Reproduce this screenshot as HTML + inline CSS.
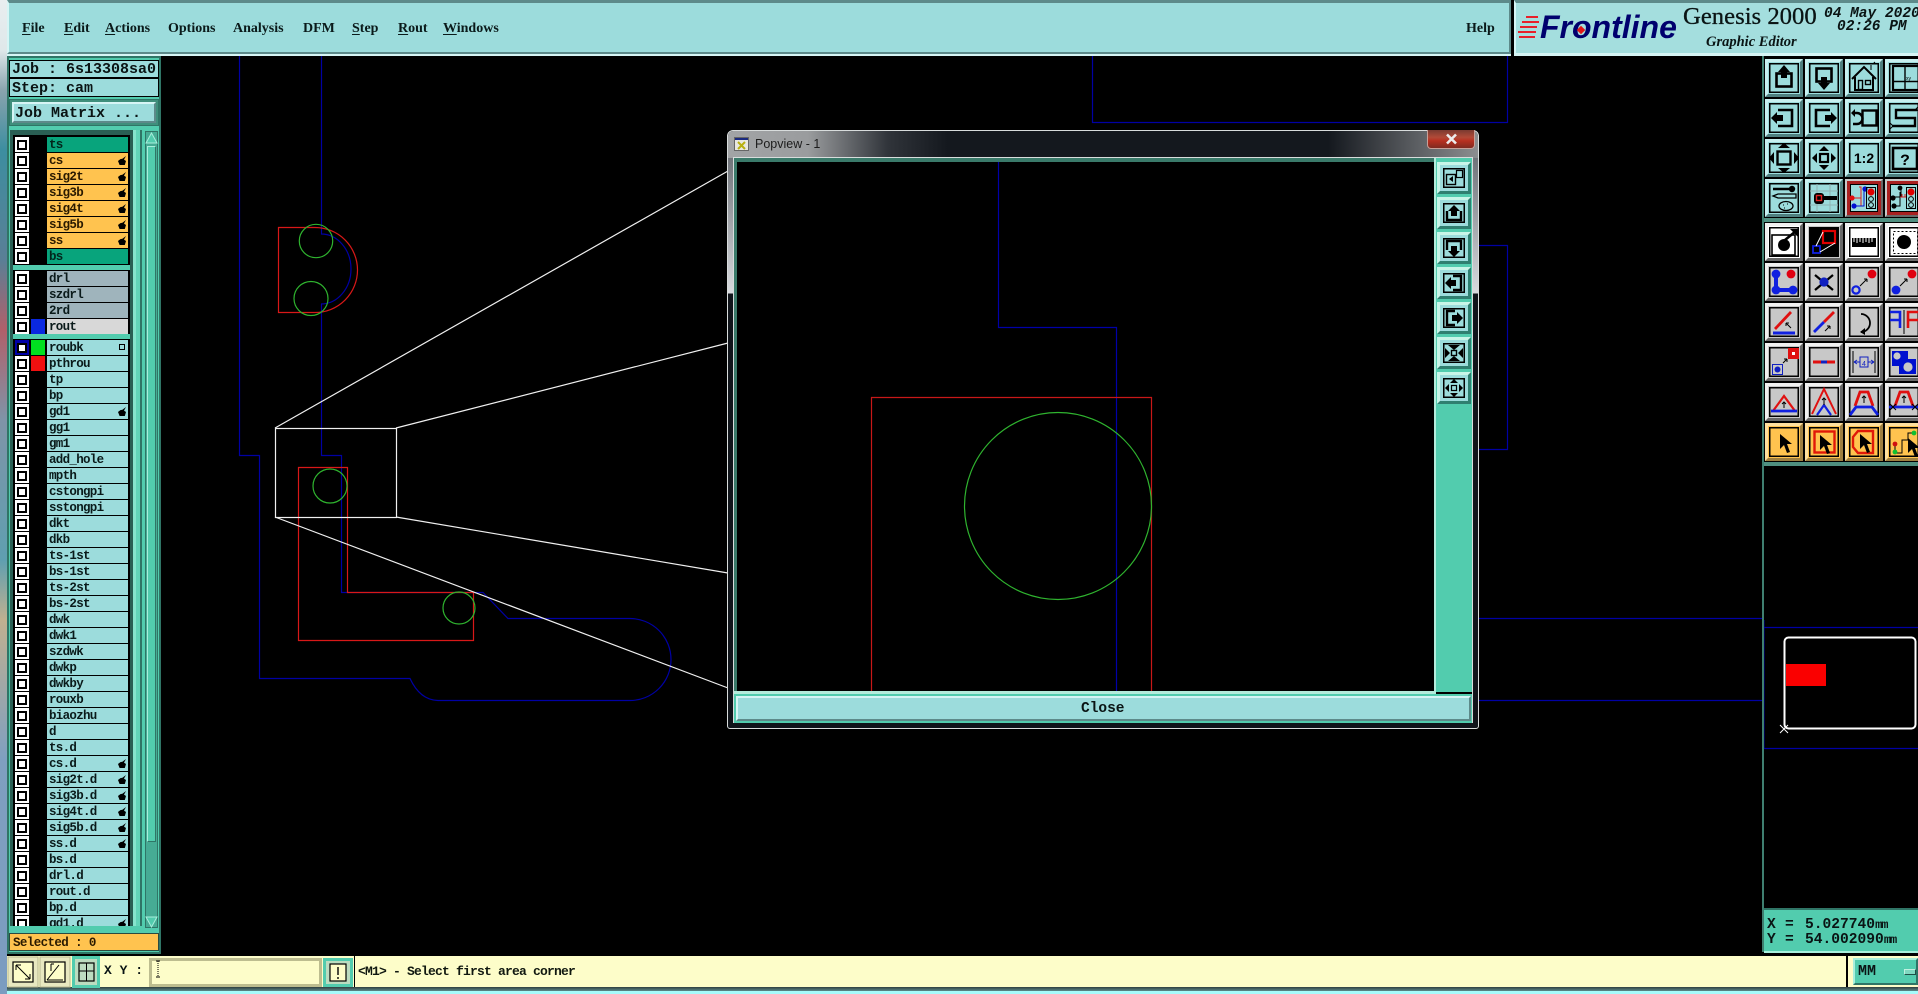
<!DOCTYPE html>
<html><head><meta charset="utf-8"><title>Genesis 2000</title>
<style>
html,body{margin:0;padding:0;background:#000;width:1918px;height:994px;overflow:hidden}
body{position:relative;font-family:"Liberation Mono",monospace;color:#000}
.a{position:absolute}
.m{position:absolute;top:20px;font:bold 14px/18px "Liberation Serif",serif;color:#0a1a1a}
.m u{text-underline-offset:2px}
.t{position:absolute;white-space:pre;font-family:"Liberation Mono",monospace;font-weight:bold;color:#0a1414}
#list{position:absolute;left:13px;top:135px;width:117px;height:791px;background:#000;overflow:hidden}
.gp{position:absolute;left:0;width:117px}
.r{position:relative;height:16px}
.c{position:absolute;left:2px;top:0;width:14px;height:15px;background:#fff}
.c:after{content:"";position:absolute;left:2px;top:3px;width:6px;height:6px;border:2px solid #000;background:#fff}
.c.bl{background:#0000a8}
.s{position:absolute;left:18px;top:0;width:14px;height:15px}
.l{position:absolute;left:34px;top:0;width:81px;height:15px;background:#9cdcdc;font:bold 12.5px/17px "Liberation Mono",monospace;letter-spacing:-.7px;padding-left:2px;box-sizing:border-box;color:#0a1a1a;white-space:pre;overflow:hidden}
.g{background:#08a47c;color:#02261c}.o{background:#ffc34f;color:#2a1a00}.y{background:#9fb4bc}.w{background:#d8d8d8}
.h:after{content:"";position:absolute;right:2px;top:3px;width:8px;height:9px;background:#000;clip-path:polygon(0 55%,30% 35%,55% 30%,100% 0,75% 40%,100% 55%,85% 100%,20% 100%)}
.q:after{content:"";position:absolute;right:3px;top:4px;width:4px;height:4px;border:1px solid #000;background:#9cdcdc}
</style></head><body>
<!-- desktop strip -->
<div class="a" style="left:0;top:0;width:7px;height:994px;background:linear-gradient(#e8eef0 0,#dfe8ea 50px,#8aa4ae 90px,#3d8ea0 150px,#5a7f96 260px,#b0606a 330px,#7f94a8 420px,#5f9fb0 560px,#c0b090 620px,#7f9fc0 760px,#7b9cc0 994px)"></div>

<!-- top menu bar -->
<div class="a" style="left:7px;top:0;width:1504px;height:54px;box-sizing:border-box;background:#9cdcdc;border-top:3px solid #5d8a8a;border-left:2px solid #d6f5f5;border-bottom:2px solid #5d8a8a;border-right:2px solid #5d8a8a"></div>
<div class="a" style="left:7px;top:54px;width:1504px;height:2px;background:#d6f5f5"></div>
<span class="m" style="left:22px"><u>F</u>ile</span>
<span class="m" style="left:64px"><u>E</u>dit</span>
<span class="m" style="left:105px"><u>A</u>ctions</span>
<span class="m" style="left:168px">Options</span>
<span class="m" style="left:233px">Analysis</span>
<span class="m" style="left:303px">DFM</span>
<span class="m" style="left:352px"><u>S</u>tep</span>
<span class="m" style="left:398px"><u>R</u>out</span>
<span class="m" style="left:443px"><u>W</u>indows</span>
<span class="m" style="left:1466px">Help</span>

<!-- logo panel -->
<div class="a" style="left:1514px;top:0;width:404px;height:56px;box-sizing:border-box;background:#a4dede;border-top:3px solid #5d8a8a;border-left:2px solid #d6f5f5;border-bottom:3px solid #d6f5f5"></div>
<svg class="a" style="left:1518px;top:14px" width="24" height="28"><path d="M8 2h12v2H8zM4 7h17v2H4zM2 12h17v2H2zM0 17h18v2H0zM1 22h16v2H1z" fill="#e8202a"/></svg>
<div class="a" style="left:1540px;top:8px;font:italic bold 32px/38px 'Liberation Sans',sans-serif;color:#00006e;white-space:pre">Frontline</div>
<div class="a" style="left:1578px;top:27px;width:6px;height:6px;background:#e01818;transform:rotate(45deg)"></div>
<div class="a" style="left:1683px;top:2px;font:24.7px/30px 'Liberation Serif',serif;color:#0a1414;white-space:pre;-webkit-text-stroke:.3px #0a1414">Genesis 2000</div>
<div class="a" style="left:1706px;top:33px;font:italic bold 14.5px/18px 'Liberation Serif',serif;color:#0a1414;white-space:pre">Graphic Editor</div>
<div class="a" style="left:1824px;top:5px;font:italic bold 14.5px/18px 'Liberation Mono',monospace;color:#0a1414;white-space:pre">04 May 2020</div>
<div class="a" style="left:1837px;top:18px;font:italic bold 14.5px/18px 'Liberation Mono',monospace;color:#0a1414;white-space:pre">02:26 PM</div>

<!-- left panel -->
<div class="a" style="left:7px;top:56px;width:154px;height:898px;box-sizing:border-box;background:#52ccae;border:2px solid #2f7566"></div>
<div class="a" style="left:9px;top:60px;width:150px;height:18px;box-sizing:border-box;background:#9cdcdc;border:1px solid #000"></div>
<div class="t" style="left:12px;top:61px;font-size:15px;line-height:18px">Job : 6s13308sa0</div>
<div class="a" style="left:9px;top:78px;width:150px;height:19px;box-sizing:border-box;background:#9cdcdc;border:1px solid #000"></div>
<div class="t" style="left:12px;top:80px;font-size:15px;line-height:18px">Step: cam</div>
<div class="a" style="left:9px;top:99px;width:150px;height:27px;box-sizing:border-box;background:#3f8f7c;border:1px solid #2f7566"></div>
<div class="a" style="left:12px;top:102px;width:144px;height:21px;box-sizing:border-box;background:#9cdcdc;border:2px solid;border-color:#d6f5f5 #5d8a8a #5d8a8a #d6f5f5"></div>
<div class="t" style="left:15px;top:104px;font-size:15px;line-height:19px">Job Matrix ...</div>
<!-- list frame -->
<div class="a" style="left:10px;top:130px;width:123px;height:796px;background:#2a5f54"></div>
<div class="a" style="left:133px;top:130px;width:3px;height:796px;background:#86e4cc"></div>
<div class="a" style="left:136px;top:130px;width:4px;height:796px;background:#62d4b8"></div>
<div class="a" style="left:140px;top:130px;width:2px;height:796px;background:#2f7566"></div>
<div id="list">
<div class="gp" style="top:2px">
<div class="r"><b class="c"></b><span class="l g">ts</span></div>
<div class="r"><b class="c"></b><span class="l o h">cs</span></div>
<div class="r"><b class="c"></b><span class="l o h">sig2t</span></div>
<div class="r"><b class="c"></b><span class="l o h">sig3b</span></div>
<div class="r"><b class="c"></b><span class="l o h">sig4t</span></div>
<div class="r"><b class="c"></b><span class="l o h">sig5b</span></div>
<div class="r"><b class="c"></b><span class="l o h">ss</span></div>
<div class="r"><b class="c"></b><span class="l g">bs</span></div>
</div>
<div class="a" style="left:0;top:130px;width:117px;height:5px;background:#52ccae"></div>
<div class="gp" style="top:136px">
<div class="r"><b class="c"></b><span class="l y">drl</span></div>
<div class="r"><b class="c"></b><span class="l y">szdrl</span></div>
<div class="r"><b class="c"></b><span class="l y">2rd</span></div>
<div class="r"><b class="c"></b><span class="s" style="background:#0a28e0"></span><span class="l w">rout</span></div>
</div>
<div class="a" style="left:0;top:199px;width:117px;height:5px;background:#52ccae"></div>
<div class="gp" style="top:205px">
<div class="r"><b class="c bl"></b><span class="s" style="background:#00e020"></span><span class="l q">roubk</span></div>
<div class="r"><b class="c"></b><span class="s" style="background:#f01010"></span><span class="l">pthrou</span></div>
<div class="r"><b class="c"></b><span class="l">tp</span></div>
<div class="r"><b class="c"></b><span class="l">bp</span></div>
<div class="r"><b class="c"></b><span class="l h">gd1</span></div>
<div class="r"><b class="c"></b><span class="l">gg1</span></div>
<div class="r"><b class="c"></b><span class="l">gm1</span></div>
<div class="r"><b class="c"></b><span class="l">add_hole</span></div>
<div class="r"><b class="c"></b><span class="l">mpth</span></div>
<div class="r"><b class="c"></b><span class="l">cstongpi</span></div>
<div class="r"><b class="c"></b><span class="l">sstongpi</span></div>
<div class="r"><b class="c"></b><span class="l">dkt</span></div>
<div class="r"><b class="c"></b><span class="l">dkb</span></div>
<div class="r"><b class="c"></b><span class="l">ts-1st</span></div>
<div class="r"><b class="c"></b><span class="l">bs-1st</span></div>
<div class="r"><b class="c"></b><span class="l">ts-2st</span></div>
<div class="r"><b class="c"></b><span class="l">bs-2st</span></div>
<div class="r"><b class="c"></b><span class="l">dwk</span></div>
<div class="r"><b class="c"></b><span class="l">dwk1</span></div>
<div class="r"><b class="c"></b><span class="l">szdwk</span></div>
<div class="r"><b class="c"></b><span class="l">dwkp</span></div>
<div class="r"><b class="c"></b><span class="l">dwkby</span></div>
<div class="r"><b class="c"></b><span class="l">rouxb</span></div>
<div class="r"><b class="c"></b><span class="l">biaozhu</span></div>
<div class="r"><b class="c"></b><span class="l">d</span></div>
<div class="r"><b class="c"></b><span class="l">ts.d</span></div>
<div class="r"><b class="c"></b><span class="l h">cs.d</span></div>
<div class="r"><b class="c"></b><span class="l h">sig2t.d</span></div>
<div class="r"><b class="c"></b><span class="l h">sig3b.d</span></div>
<div class="r"><b class="c"></b><span class="l h">sig4t.d</span></div>
<div class="r"><b class="c"></b><span class="l h">sig5b.d</span></div>
<div class="r"><b class="c"></b><span class="l h">ss.d</span></div>
<div class="r"><b class="c"></b><span class="l">bs.d</span></div>
<div class="r"><b class="c"></b><span class="l">drl.d</span></div>
<div class="r"><b class="c"></b><span class="l">rout.d</span></div>
<div class="r"><b class="c"></b><span class="l">bp.d</span></div>
<div class="r"><b class="c"></b><span class="l h">gd1.d</span></div>
</div>
</div>
<!-- scrollbar -->
<div class="a" style="left:145px;top:131px;width:13px;height:797px;background:#46ab94;box-sizing:border-box;border:1px solid #2f7566"></div>
<div class="a" style="left:147px;top:146px;width:9px;height:696px;box-sizing:border-box;background:#52ccae;border:1px solid;border-color:#a8efdc #2f7566 #2f7566 #a8efdc"></div>
<svg class="a" style="left:145px;top:131px" width="13" height="14"><path d="M6.5 2L12 12H1z" fill="#52ccae" stroke="#a8efdc"/></svg>
<svg class="a" style="left:145px;top:915px" width="13" height="14"><path d="M6.5 12L12 2H1z" fill="#52ccae" stroke="#a8efdc"/></svg>
<!-- selected -->
<div class="a" style="left:9px;top:933px;width:150px;height:18px;box-sizing:border-box;background:#ffc34f;border:1px solid #2a4a40"></div>
<div class="t" style="left:13px;top:934px;font-size:12.5px;line-height:18px;letter-spacing:-.6px;color:#2a1a00">Selected : 0</div>

<!-- canvas geometry -->
<svg class="a" style="left:0;top:0" width="1918" height="994" fill="none">
<g stroke="#0000a4" stroke-width="1.2">
<path d="M239.5 56V455.5H259.5V678.5H410Q420 700 438 700.5H630A41 41 0 0 0 630 618.5H508L483 592.5H341.5V455.5H321.5V304"/>
<path d="M321.5 56V234.5M321 234A30 35 0 0 1 321 304"/>
<path d="M1092.5 56V122.5H1507.5V56"/>
<path d="M1479 245.5H1507.5V449.5H1479"/>
<path d="M1479 618.5H1763M1479 700.5H1763"/>
</g>
<g stroke="#d81818" stroke-width="1.2">
<path d="M278.5 227.5H315A42.5 42.5 0 0 1 315 312.5H278.5Z"/>
<path d="M298.5 467.5V640.5H473.5V592.5H347.5V467.5Z"/>
</g>
<g stroke="#2fb42f" stroke-width="1.2">
<circle cx="316" cy="241" r="16.7"/><circle cx="311" cy="298.5" r="17"/><circle cx="330" cy="486" r="17"/><circle cx="459" cy="608" r="16"/>
</g>
<g stroke="#f0f0f0" stroke-width="1.2">
<rect x="275.5" y="428.5" width="121" height="89"/>
<path d="M275 428L728 171M396 428L728 343M396 517L728 573M275 517L728 688"/>
</g>
</svg>

<!-- right panel line + separators -->
<div class="a" style="left:1762px;top:56px;width:2px;height:896px;background:#3f7f70"></div>
<div class="a" style="left:1764px;top:218px;width:154px;height:4px;background:#4f8f80"></div>
<div class="a" style="left:1764px;top:462px;width:154px;height:4px;background:#4f8f80"></div>

<!-- minimap -->
<svg class="a" style="left:1764px;top:620px" width="154" height="135" fill="none">
<path d="M0 7.5H154M0 128.5H154" stroke="#0000a4" stroke-width="1.2"/>
<path d="M0 0V129" stroke="#0000a4"/>
<rect x="22" y="44" width="40" height="22" fill="#fa0000"/>
<rect x="20.5" y="17.5" width="131" height="91" rx="4" stroke="#fff" stroke-width="2"/>
<path d="M16 105l8 8M24 105l-8 8" stroke="#fff"/>
</svg>

<!-- coord panel -->
<div class="a" style="left:1764px;top:908px;width:154px;height:45px;box-sizing:border-box;background:#52ccae;border-top:2px solid #2f7566;border-bottom:2px solid #a8efdc"></div>
<div class="t" style="left:1767px;top:917px;font-size:14.6px;line-height:17px">X</div>
<div class="t" style="left:1785px;top:917px;font-size:14.6px;line-height:17px">=</div>
<div class="t" style="left:1805px;top:917px;font-size:14.6px;line-height:17px">5.027740<span style="font-size:12px;letter-spacing:-1px">mm</span></div>
<div class="t" style="left:1767px;top:932px;font-size:14.6px;line-height:17px">Y</div>
<div class="t" style="left:1785px;top:932px;font-size:14.6px;line-height:17px">=</div>
<div class="t" style="left:1805px;top:932px;font-size:14.6px;line-height:17px">54.002090<span style="font-size:12px;letter-spacing:-1px">mm</span></div>

<!-- status bar -->
<div class="a" style="left:7px;top:956px;width:1911px;height:31px;background:#fdfdc9"></div>
<div class="a" style="left:7px;top:987px;width:1911px;height:4px;background:linear-gradient(#2f3f3f,#5d8a8a)"></div>
<div class="a" style="left:7px;top:991px;width:1911px;height:3px;background:#a6fbfb"></div>
<svg class="a" style="left:7px;top:956px" width="350" height="32" fill="none">
<g><rect x="1" y="1" width="30" height="30" fill="#e8e8c0" stroke="#b8b890"/><rect x="6" y="6" width="20" height="20" stroke="#000" stroke-width="1.2" fill="#fdfdc9"/><path d="M9 9l14 14M9 9h5M9 9v5M23 23h-5M23 23v-5" stroke="#000"/></g>
<g transform="translate(32,0)"><rect x="1" y="1" width="30" height="30" fill="#e8e8c0" stroke="#b8b890"/><rect x="6" y="6" width="20" height="20" stroke="#000" stroke-width="1.2" fill="#fdfdc9"/><path d="M8 24L20 9M8 24H24M12 8v7M12 8h3" stroke="#000"/></g>
<g transform="translate(65,0)"><rect x="0" y="0" width="28" height="32" fill="#52ccae"/><rect x="3" y="3" width="22" height="26" fill="#bcdcc0"/><rect x="7" y="7" width="15" height="18" stroke="#000" stroke-width="1.2"/><path d="M14.5 7v18M7 15h15" stroke="#000"/></g>
<g transform="translate(142,2)"><rect x="1.5" y="1.5" width="170" height="26" stroke="#bdbd8f" stroke-width="3"/><path d="M9 3v16" stroke="#000" stroke-dasharray="1 1"/><path d="M7 3h4M7 19h4" stroke="#000"/></g>
<g transform="translate(316,2)"><rect x="0" y="0" width="30" height="29" fill="#52ccae"/><rect x="3" y="3" width="24" height="23" fill="#bcdcc0"/><rect x="7" y="6" width="16" height="17" fill="#fdfdc9" stroke="#000" stroke-width="1.2"/><path d="M15 9v8M15 19v2" stroke="#000" stroke-width="1.4"/></g>
<path d="M347.5 0V31" stroke="#000"/>
</svg>
<div class="t" style="left:104px;top:963px;font-size:13px;line-height:16px">X Y :</div>
<div class="t" style="left:358px;top:964px;font-size:13px;line-height:15px;letter-spacing:-.8px;color:#101810">&lt;M1&gt; - Select first area corner</div>
<div class="a" style="left:1846px;top:956px;width:2px;height:31px;background:#000"></div>
<div class="a" style="left:1853px;top:958px;width:65px;height:27px;box-sizing:border-box;background:#52ccae;border:2px solid;border-color:#a8efdc #2f7566 #2f7566 #a8efdc"></div>
<div class="t" style="left:1858px;top:963px;font-size:15px;line-height:17px;letter-spacing:0">MM</div>
<div class="a" style="left:1904px;top:969px;width:12px;height:6px;box-sizing:border-box;background:#7fd8c0;border:1px solid;border-color:#c0f0e0 #1f4f46 #1f4f46 #c0f0e0"></div>

<!-- popup window -->
<div class="a" style="left:727px;top:130px;width:752px;height:599px;box-sizing:border-box;border:1px solid #d8dcdc;border-radius:6px 6px 3px 3px;background:#10141a;overflow:hidden">
  <div class="a" style="left:0;top:0;width:750px;height:27px;background:linear-gradient(90deg,#a2a4a6 0,#9a9c9e 80px,#30343a 160px,#14181e 220px,#14181e 600px,#55585c 680px,#8c8e90 750px)"></div>
  <div class="a" style="left:0;top:27px;width:5px;height:141px;background:linear-gradient(#70747a,#d8dade 135px,#10141a 136px)"></div>
  <div class="a" style="left:745px;top:27px;width:5px;height:141px;background:linear-gradient(#70747a,#d8dade 135px,#10141a 136px)"></div>
</div>
<div class="a" style="left:733px;top:157px;width:740px;height:566px;box-sizing:border-box;background:#52ccae;border:1px solid #d8dcdc;border-bottom:none"></div>
<svg class="a" style="left:734px;top:135px" width="16" height="18"><rect x=".5" y="2.5" width="14" height="13" fill="#e8e8e0" stroke="#666"/><rect x="1" y="3" width="13" height="2" fill="#1a2a80"/><path d="M4 7l7 7M11 7l-7 7" stroke="#b8b010" stroke-width="2"/></svg>
<div class="a" style="left:755px;top:136px;font:12.5px/16px 'Liberation Sans','Noto Sans CJK SC',sans-serif;color:#1c1c1c;white-space:pre">Popview - 1</div>
<div class="a" style="left:1427px;top:130px;width:48px;height:19px;box-sizing:border-box;border:1px solid #c8a098;border-top:none;border-radius:0 0 4px 4px;background:linear-gradient(#7a3a30,#b04a38 40%,#b83020 60%,#7f2a20)"></div>
<svg class="a" style="left:1445px;top:133px" width="14" height="12"><path d="M2 1.500l9 9M11 1.500l-9 9" stroke="#ececec" stroke-width="2.6"/></svg>
<!-- popup canvas -->
<div class="a" style="left:734px;top:158px;width:702px;height:537px;background:#3a7a6a"></div>
<div class="a" style="left:737px;top:162px;width:697px;height:529px;background:#000"></div>
<div class="a" style="left:734px;top:691px;width:702px;height:3px;background:#b4ecdc"></div>
<div class="a" style="left:1434px;top:158px;width:2px;height:536px;background:#b4ecdc"></div>
<div class="a" style="left:1436px;top:692px;width:36px;height:2px;background:#000"></div>
<div class="a" style="left:734px;top:694px;width:738px;height:29px;background:#52ccae"></div>
<div class="a" style="left:736px;top:696px;width:735px;height:25px;box-sizing:border-box;background:#9cdcdc;border:2px solid;border-color:#d6f5f5 #5d8a8a #5d8a8a #d6f5f5"></div>
<div class="t" style="left:1081px;top:700px;font-size:14.5px;line-height:18px">Close</div>

<!-- top svg: popup geometry + toolbars -->
<svg class="a" style="left:0;top:0" width="1918" height="994" fill="none">
<defs>
<g id="bt"><rect width="38" height="38" fill="#c8f0f0"/><path d="M38 0V38H0L3 35H35V3Z" fill="#4f8080"/><rect x="3" y="3" width="32" height="32" fill="#9cdcdc"/><rect x="4.750" y="4.750" width="28.500" height="28.500" stroke="#000" stroke-width="1.500"/></g>
<g id="bg"><rect width="38" height="38" fill="#f0f0f0"/><path d="M38 0V38H0L3 35H35V3Z" fill="#686868"/><rect x="3" y="3" width="32" height="32" fill="#c8c8c8"/><rect x="4.750" y="4.750" width="28.500" height="28.500" stroke="#000" stroke-width="1.500"/></g>
<g id="bw"><rect width="38" height="38" fill="#f0f0f0"/><path d="M38 0V38H0L3 35H35V3Z" fill="#686868"/><rect x="3" y="3" width="32" height="32" fill="#fff"/><rect x="4.750" y="4.750" width="28.500" height="28.500" stroke="#000" stroke-width="1.500"/></g>
<g id="bo"><rect width="38" height="38" fill="#ffe0a0"/><path d="M38 0V38H0L3 35H35V3Z" fill="#a08040"/><rect x="3" y="3" width="32" height="32" fill="#ffc34f"/><rect x="4.750" y="4.750" width="28.500" height="28.500" stroke="#000" stroke-width="1.500"/></g>
<g id="br"><rect width="38" height="38" fill="#c8c8c8"/><path d="M38 0V38H0L3 35H35V3Z" fill="#686868"/><rect x="2" y="2" width="34" height="34" fill="#a82020"/><rect x="5.500" y="5.500" width="27" height="27" fill="#9cdcdc" stroke="#000"/></g>
<g id="bp"><rect width="34" height="32" fill="#2f7f70"/><path d="M0 0H34L31 3H3V29L0 32Z" fill="#c8f5e8"/><rect x="3" y="3" width="28" height="26" fill="#9cdcdc"/><rect x="6.750" y="6.750" width="20.500" height="18.500" stroke="#000" stroke-width="1.500"/></g>
<path id="ptr" d="M0 0L0 15L4 11L7 19L10 18L7 10L12 10Z" fill="#000"/>
</defs>

<!-- popup geometry -->
<path d="M998.5 162V327.5H1116.5V691" stroke="#0000a8" stroke-width="1.2"/>
<path d="M871.5 691V397.5H1151.5V691" stroke="#c81818" stroke-width="1.2"/>
<circle cx="1058" cy="506" r="93.5" stroke="#2fb42f" stroke-width="1.2"/>

<!-- popup toolbar -->
<g transform="translate(1437,162)"><use href="#bp"/><rect x="9.5" y="12.5" width="9" height="10" stroke="#000" stroke-width="1.4"/><rect x="19.5" y="8.5" width="6" height="7" stroke="#000" stroke-width="1.2"/><path d="M16 14l-4 3 4 3z" fill="#000"/></g>
<g transform="translate(1437,197)"><use href="#bp"/><path d="M10 14v9h14v-9" stroke="#000" stroke-width="2.4"/><path d="M17 8l6 6h-3v5h-6v-5h-3z" fill="#000"/></g>
<g transform="translate(1437,232)"><use href="#bp"/><path d="M10 18V9h14v9" stroke="#000" stroke-width="2.4"/><path d="M17 25l6-6h-3v-5h-6v5h-3z" fill="#000"/></g>
<g transform="translate(1437,267)"><use href="#bp"/><path d="M16 9h8v14h-8" stroke="#000" stroke-width="2.4"/><path d="M8 16l6-6v3h5v6h-5v3z" fill="#000"/></g>
<g transform="translate(1437,302)"><use href="#bp"/><path d="M18 9h-8v14h8" stroke="#000" stroke-width="2.4"/><path d="M26 16l-6-6v3h-5v6h5v3z" fill="#000"/></g>
<g transform="translate(1437,337)"><use href="#bp"/><rect x="14.5" y="13.5" width="5" height="5" stroke="#000" stroke-width="1.4"/><path d="M11 8h12l-6 5zM11 24h12l-6-5zM8 11v10l5-5zM26 11v10l-5-5z" fill="#000"/></g>
<g transform="translate(1437,372)"><use href="#bp"/><rect x="14.5" y="13.5" width="5" height="5" stroke="#000" stroke-width="1.2"/><path d="M17 7l4 4h-8zM17 25l4-4h-8zM8 16l4-4v8zM26 16l-4-4v8z" fill="#000"/></g>

<!-- main toolbar row 1 -->
<g transform="translate(1765,59)"><use href="#bt"/><rect x="11.5" y="14.5" width="15" height="13" stroke="#000" stroke-width="2.6"/><path d="M19 6l6 7h-3v6h-6v-6h-3z" fill="#000"/></g>
<g transform="translate(1805,59)"><use href="#bt"/><rect x="11.5" y="9.5" width="15" height="13" stroke="#000" stroke-width="2.6"/><path d="M19 31l-6-7h3v-6h6v6h3z" fill="#000"/></g>
<g transform="translate(1845,59)"><use href="#bt"/><path d="M7 20L19 8L31 20M10 18V31H28V18" stroke="#000" stroke-width="2"/><rect x="13.5" y="21.5" width="4" height="9" stroke="#000" stroke-width="1.4"/><rect x="20.5" y="21.5" width="5" height="4" stroke="#000" stroke-width="1.4"/><path d="M26 11V6M28 5l2-2" stroke="#000"/></g>
<g transform="translate(1885,59)"><use href="#bt"/><rect x="8" y="7" width="30" height="24" stroke="#000" stroke-width="2.2"/><path d="M20 7V31M8 22.500H38" stroke="#000" stroke-width="1.400"/><text x="21" y="21" font-family="Liberation Sans" font-size="5" fill="#000">xy</text></g>
<!-- row 2 -->
<g transform="translate(1765,99)"><use href="#bt"/><path d="M13 11h14v16H13" stroke="#000" stroke-width="2.6"/><path d="M6 19l6-6v3h6v6h-6v3z" fill="#000"/></g>
<g transform="translate(1805,99)"><use href="#bt"/><path d="M25 11H11v16h14" stroke="#000" stroke-width="2.6"/><path d="M32 19l-6-6v3h-6v6h6v3z" fill="#000"/></g>
<g transform="translate(1845,99)"><use href="#bt"/><rect x="17.5" y="11.5" width="14" height="15" stroke="#000" stroke-width="2.4"/><path d="M9 14h3a4 4 0 0 1 0 11H8" stroke="#000" stroke-width="2.4"/><path d="M6 14l4-4v8z" fill="#000"/></g>
<g transform="translate(1885,99)"><use href="#bt"/><path d="M32 11H11V19H30V27H7" stroke="#000" stroke-width="2.4"/><path d="M34 7l-3 3 3 3M5 24l3 3-3 3" stroke="#000"/></g>
<!-- row 3 -->
<g transform="translate(1765,139)"><use href="#bt"/><rect x="12.5" y="12.5" width="13" height="13" stroke="#000" stroke-width="2.4"/><path d="M13 9h12l-6-5zM13 29h12l-6 5zM9 13v12l-5-6zM29 13v12l5-6z" fill="#000"/></g>
<g transform="translate(1805,139)"><use href="#bt"/><rect x="15" y="15" width="8" height="8" stroke="#000" stroke-width="2.2"/><path d="M19 7l5 5H14zM19 31l5-5H14zM7 19l5-5v10zM31 19l-5-5v10z" fill="#000"/></g>
<g transform="translate(1845,139)"><use href="#bt"/><text x="19" y="24" text-anchor="middle" font-family="Liberation Sans" font-weight="bold" font-size="14" fill="#000">1:2</text></g>
<g transform="translate(1885,139)"><use href="#bt"/><rect x="8" y="9" width="24" height="21" stroke="#000" stroke-width="2.6"/><text x="20" y="26" text-anchor="middle" font-family="Liberation Mono" font-weight="bold" font-size="16" fill="#000">?</text></g>
<!-- row 4 -->
<g transform="translate(1765,179)"><use href="#bt"/><path d="M8 10H25" stroke="#000" stroke-width="2.6"/><circle cx="27" cy="10" r="3.200" fill="#000"/><path d="M8 17l5-2H31V19H13Z" stroke="#000" stroke-width="1.300"/><ellipse cx="21" cy="27" rx="7" ry="4.5" stroke="#000" stroke-width="1.300"/><path d="M18 26h1M22 25h1M19 29h1" stroke="#000"/></g>
<g transform="translate(1805,179)"><use href="#bt"/><path d="M12 5V33M25 5V33M5 12H33M5 26H33" stroke="#8fb4b4"/><rect x="9" y="14" width="10" height="11" rx="3" fill="#000"/><rect x="11.5" y="16.5" width="5" height="5" stroke="#e02020" stroke-width="1.4"/><path d="M19 19H32" stroke="#000" stroke-width="4"/></g>
<g transform="translate(1845,179)"><use href="#br"/><path d="M8 19H16V27H9M16 19V8H14" stroke="#e02020"/><path d="M10 27H19V9" stroke="#0010d0"/><circle cx="7" cy="19" r="2.6" fill="#e01010"/><circle cx="20" cy="10" r="2.6" fill="#0010d0"/><circle cx="9" cy="27" r="2.6" fill="#0010d0"/><circle cx="26" cy="13" r="3.6" fill="#e00000"/><circle cx="26" cy="20" r="2.4" stroke="#000"/><circle cx="26" cy="26" r="2.4" stroke="#000"/><rect x="21.5" y="8.5" width="9" height="21" stroke="#000"/></g>
<g transform="translate(1885,179)"><use href="#br"/><path d="M9 18H16V9M9 27H15V13" stroke="#000"/><path d="M15 18h6M17 15v3M20 15v3" stroke="#d02020"/><circle cx="8" cy="19" r="2.6" fill="#000"/><circle cx="15" cy="9" r="2.4" fill="#000"/><circle cx="9" cy="27" r="2.6" fill="#000"/><circle cx="26" cy="13" r="3.6" fill="#e00000"/><circle cx="26" cy="20" r="2.4" stroke="#000"/><circle cx="26" cy="26" r="2.4" stroke="#000"/><rect x="21.5" y="8.5" width="9" height="21" stroke="#000"/></g>

<!-- block 2 row 1 -->
<g transform="translate(1765,223)"><use href="#bw"/><rect x="7" y="12" width="23" height="20" stroke="#000" stroke-width="1.6"/><circle cx="19" cy="22" r="6" fill="#000"/><path d="M20 17L31 8" stroke="#000" stroke-width="2.6"/><path d="M25 6h8v8z" fill="#000"/></g>
<g transform="translate(1805,223)"><use href="#bg"/><rect x="5" y="5" width="28" height="28" fill="#000"/><rect x="18" y="8" width="12" height="12" stroke="#e00000" stroke-width="2.2"/><rect x="8" y="23" width="7" height="7" stroke="#1020e0" stroke-width="1.8"/><path d="M18 9L11 23M30 20L15 29" stroke="#fff"/></g>
<g transform="translate(1845,223)"><use href="#bw"/><rect x="7" y="15" width="24" height="9" fill="#000"/><path d="M9 15v4M12 15v5M15 15v4M18 15v5M21 15v4M24 15v5M27 15v4" stroke="#fff"/></g>
<g transform="translate(1885,223)"><use href="#bw"/><rect x="8.5" y="8.5" width="24" height="22" stroke="#000" stroke-dasharray="2 2"/><circle cx="19" cy="19" r="7" fill="#000"/></g>
<!-- row 2 -->
<g transform="translate(1765,263)"><use href="#bg"/><path d="M11 11V27H28" stroke="#1020e0" stroke-width="4"/><circle cx="11" cy="11" r="4.4" fill="#1020e0"/><circle cx="11" cy="27" r="4.4" fill="#1020e0"/><circle cx="28" cy="27" r="4.4" fill="#1020e0"/><circle cx="26" cy="11" r="4.4" fill="#e00010"/></g>
<g transform="translate(1805,263)"><use href="#bg"/><path d="M10 12L28 27M28 12L10 27" stroke="#000" stroke-width="2.2"/><circle cx="19" cy="19" r="4.6" fill="#1020c0"/></g>
<g transform="translate(1845,263)"><use href="#bg"/><circle cx="11" cy="27" r="3.6" stroke="#1020e0" stroke-width="2.2"/><circle cx="27" cy="11" r="4.4" fill="#e00010"/><path d="M15 23L22 16M22 16h-3M22 16v3" stroke="#000"/></g>
<g transform="translate(1885,263)"><use href="#bg"/><circle cx="11" cy="27" r="4.4" fill="#1020e0"/><circle cx="27" cy="11" r="4.4" fill="#e00010"/><path d="M15 23L22 16M22 16h-3M22 16v3" stroke="#000"/></g>
<!-- row 3 -->
<g transform="translate(1765,303)"><use href="#bg"/><path d="M10 26L26 9" stroke="#e01010" stroke-width="2.8"/><path d="M8 30H30" stroke="#1020e0" stroke-width="3"/><path d="M21 20l5 5M21 20h3M21 20v3" stroke="#000"/></g>
<g transform="translate(1805,303)"><use href="#bg"/><path d="M9 29L19 19" stroke="#1020e0" stroke-width="2.8"/><path d="M19 19L29 9" stroke="#e01010" stroke-width="2.8"/><path d="M20 28l5-5M25 23h-3M25 23v3" stroke="#000"/></g>
<g transform="translate(1845,303)"><use href="#bg"/><path d="M16 11a9 9 0 0 1 0 18" stroke="#000" stroke-width="1.8"/><path d="M15 29l5-4v7z" fill="#000"/></g>
<g transform="translate(1885,303)"><use href="#bg"/><path d="M5 9H15V25M5 17H15" stroke="#1020e0" stroke-width="2.6"/><path d="M19 7V31" stroke="#000"/><path d="M34 9H23V25M23 17H34" stroke="#e01010" stroke-width="2.6"/></g>
<!-- row 4 -->
<g transform="translate(1765,343)"><use href="#bg"/><rect x="23" y="5" width="11" height="11" fill="#e01010"/><rect x="27" y="9" width="3" height="3" fill="#fff"/><rect x="7.5" y="21.5" width="10" height="10" stroke="#1020c0"/><circle cx="12.5" cy="26.5" r="3" fill="#1020c0"/><path d="M18 20l4-4M22 16h-3M22 16v3" stroke="#000"/></g>
<g transform="translate(1805,343)"><use href="#bg"/><path d="M8 19H30" stroke="#e01010" stroke-width="3"/><path d="M16 19H22" stroke="#1020c0" stroke-width="3"/></g>
<g transform="translate(1845,343)"><use href="#bg"/><path d="M8 8V30M30 8V30" stroke="#000"/><path d="M9 19H29M9 19l3-2M9 19l3 2M29 19l-3-2M29 19l-3 2" stroke="#1020c0"/><rect x="15" y="14" width="8" height="10" fill="#c8c8c8" stroke="#1020c0"/><text x="19" y="23" text-anchor="middle" font-family="Liberation Sans" font-size="7" fill="#1020c0">4</text></g>
<g transform="translate(1885,343)"><use href="#bg"/><rect x="7" y="8" width="16" height="15" fill="#0010d0"/><rect x="14" y="16" width="17" height="15" fill="#0010d0"/><circle cx="12" cy="13" r="3.6" fill="#c8c8c8"/><circle cx="23" cy="24" r="4.6" fill="#c8c8c8"/></g>
<!-- row 5 -->
<g transform="translate(1765,383)"><use href="#bg"/><path d="M8 28L19 13L30 28" stroke="#e01010" stroke-width="2.2"/><path d="M6 28H32" stroke="#1020e0" stroke-width="2.8"/><path d="M19 25V19M17 21l2-2 2 2" stroke="#000"/></g>
<g transform="translate(1805,383)"><use href="#bg"/><path d="M7 31L19 6L31 31" stroke="#e01010" stroke-width="2"/><path d="M12 32L19 22L26 32" stroke="#1020e0" stroke-width="2.2"/><path d="M19 22V15M17 17l2-2 2 2" stroke="#000"/></g>
<g transform="translate(1845,383)"><use href="#bg"/><path d="M10 23L15 9H23L28 23" stroke="#e01010" stroke-width="2.8"/><path d="M5 32L11 24H27L33 32" stroke="#1020e0" stroke-width="2.8"/><path d="M19 20V13M17 15l2-2 2 2" stroke="#000"/></g>
<g transform="translate(1885,383)"><use href="#bg"/><path d="M10 23L15 9H23L28 23" stroke="#e01010" stroke-width="2.8"/><path d="M4 24H34" stroke="#1020e0" stroke-width="2.8"/><path d="M19 20V13M17 15l2-2 2 2M5 21l6 6M11 21l-6 6M27 21l6 6M33 21l-6 6" stroke="#000"/></g>
<!-- row 6 -->
<g transform="translate(1765,423)"><use href="#bo"/><use href="#ptr" transform="translate(15,11)"/></g>
<g transform="translate(1805,423)"><use href="#bo"/><rect x="9.5" y="8.5" width="20" height="21" stroke="#e01808" stroke-width="2.4"/><use href="#ptr" transform="translate(15,12)"/></g>
<g transform="translate(1845,423)"><use href="#bo"/><path d="M13 8H28V30H13L8 24V14Z" stroke="#e01808" stroke-width="2.4"/><use href="#ptr" transform="translate(15,11)"/></g>
<g transform="translate(1885,423)"><use href="#bo"/><path d="M10 23V30H17V17H23V10H28" stroke="#000"/><circle cx="10" cy="21" r="2.4" fill="#d01010"/><circle cx="29" cy="10" r="2.4" fill="#10c030"/><circle cx="10" cy="29" r="2.4" fill="#10c030"/><use href="#ptr" transform="translate(23,15)"/></g>
</svg>
</body></html>
